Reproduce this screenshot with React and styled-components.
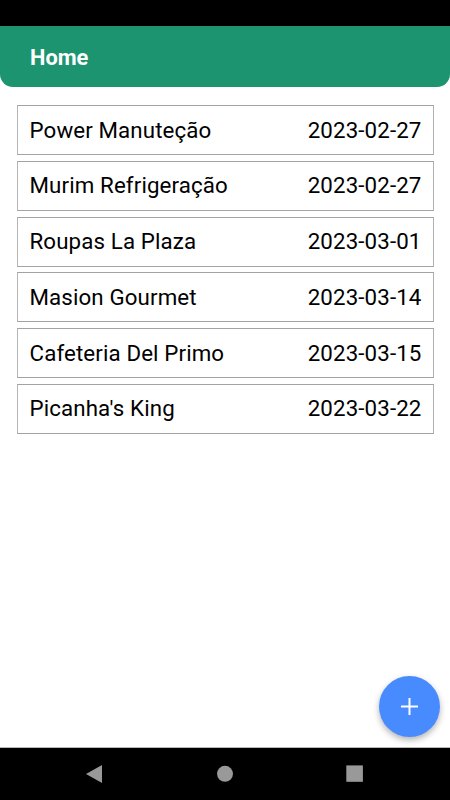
import React, { Component } from 'react'
import styled, { createGlobalStyle } from 'styled-components'

const GlobalStyle = createGlobalStyle`
  * {
    box-sizing: border-box;
  }
  body {
    margin: 0;
    background: #fff;
    font-family: Roboto, 'Liberation Sans', sans-serif;
  }
`

const Screen = styled.div`
  display: flex;
  flex-direction: column;
  height: 100vh;
  overflow: hidden;
`

const StatusBar = styled.div`
  flex: 0 0 26px;
  background: #000;
`

const Content = styled.main`
  position: relative;
  flex: 1;
  border-bottom: 1px solid #b8b8b8;
`

const Header = styled.header`
  display: flex;
  align-items: center;
  height: 61px;
  padding: 2px 30px 0;
  background: #1c946f;
  border-radius: 0 0 13px 13px;
`

const Title = styled.h1`
  margin: 0;
  color: #fff;
  font-size: 21.8px;
  font-weight: 700;
  line-height: 26px;
`

const List = styled.ul`
  display: flex;
  flex-direction: column;
  gap: 5.75px;
  margin: 0;
  padding: 18px 16.5px 0 17px;
  list-style: none;
`

const Item = styled.li`
  display: flex;
  justify-content: space-between;
  align-items: center;
  height: 50px;
  padding: 0 11px 0.9px 11.5px;
  border: 1px solid #a3a3a3;
  border-left-color: #b5b5b5;
  border-right-color: #b0b0b0;
  color: #000;
  font-size: 22.3px;
  font-weight: 400;
  letter-spacing: 0.12px;
  line-height: 26px;
  white-space: nowrap;
`

const AddButton = styled.button`
  position: absolute;
  right: 10px;
  bottom: 10px;
  display: flex;
  justify-content: center;
  align-items: center;
  width: 61px;
  height: 61px;
  padding: 0;
  border: none;
  border-radius: 50%;
  background: #478bff;
  box-shadow: 0 3px 6px rgba(0, 0, 0, 0.3);
`

const NavBar = styled.nav`
  display: grid;
  grid-template-columns: repeat(3, 130px);
  justify-content: center;
  align-items: center;
  justify-items: center;
  flex: 0 0 52px;
  background: #000;
`

const NavIcon = styled.svg`
  display: block;
  width: 20px;
  height: 20px;
  fill: #999;
`

const companies = [
  { name: 'Power Manuteção', date: '2023-02-27' },
  { name: 'Murim Refrigeração', date: '2023-02-27' },
  { name: 'Roupas La Plaza', date: '2023-03-01' },
  { name: 'Masion Gourmet', date: '2023-03-14' },
  { name: 'Cafeteria Del Primo', date: '2023-03-15' },
  { name: "Picanha's King", date: '2023-03-22' },
]

export default class App extends Component {
  render() {
    return (
      <Screen>
        <GlobalStyle />
        <StatusBar />
        <Content>
          <Header>
            <Title>Home</Title>
          </Header>
          <List>
            {companies.map((company) => (
              <Item key={company.name}>
                <span>{company.name}</span>
                <span>{company.date}</span>
              </Item>
            ))}
          </List>
          <AddButton aria-label="Adicionar">
            <svg width="17" height="17" viewBox="0 0 17 17">
              <path d="M8.5 0v17M0 8.5h17" stroke="#fff" strokeWidth="2" />
            </svg>
          </AddButton>
        </Content>
        <NavBar>
          <NavIcon viewBox="0 0 20 20">
            <path d="M1 10 17 1v18z" />
          </NavIcon>
          <NavIcon viewBox="0 0 20 20">
            <circle cx="10" cy="9.8" r="8" />
          </NavIcon>
          <NavIcon viewBox="0 0 20 20">
            <rect x="1.3" y="1.4" width="16.6" height="16.4" />
          </NavIcon>
        </NavBar>
      </Screen>
    )
  }
}
